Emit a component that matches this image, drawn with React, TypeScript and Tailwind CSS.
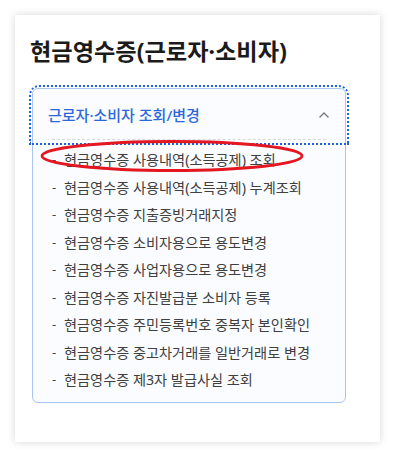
import React from "react";

const items = [
  "현금영수증 사용내역(소득공제) 조회",
  "현금영수증 사용내역(소득공제) 누계조회",
  "현금영수증 지출증빙거래지정",
  "현금영수증 소비자용으로 용도변경",
  "현금영수증 사업자용으로 용도변경",
  "현금영수증 자진발급분 소비자 등록",
  "현금영수증 주민등록번호 중복자 본인확인",
  "현금영수증 중고차거래를 일반거래로 변경",
  "현금영수증 제3자 발급사실 조회",
];

const App: React.FC = () => {
  return (
    <div className="w-[395px] h-[457px] bg-white p-[15px] font-['Noto_Sans','Noto_Sans_CJK_KR',sans-serif]">
      <div className="w-[365px] h-[427px] bg-white shadow-[0_0_8px_rgba(0,0,0,0.16)] pt-[21px] pl-[17px]">
        <h1 className="text-[23.2px] leading-[31px] font-bold text-[#1b1b1b] -ml-[2px]">
          현금영수증(근로자·소비자)
        </h1>
        <div className="mt-[21px] w-[314px] rounded-[6px] border border-[#a9c6f3] bg-[#fafcff]">
          <button className="w-full h-[52px] flex items-center justify-between pl-[15px] pr-[14px] outline-2 outline-dotted outline-[#1f5fe0] outline-offset-[2px] rounded-t-[6px] relative">
            <span className="text-[15px] font-medium text-[#2c67dc]">
              근로자·소비자 조회/변경
            </span>
            <svg width="12" height="8" viewBox="0 0 12 8" className="mr-[1px]">
              <path d="M1.5 6.5 L6 2 L10.5 6.5" fill="none" stroke="#7a7a82" strokeWidth="1.4" />
            </svg>
            <div className="absolute left-[19px] right-[19px] bottom-[1px] border-b border-dashed border-[#d6d9de]" />
          </button>
          <ul className="relative pt-[5px] pb-[8px] pl-[19px]">
            {items.map((t) => (
              <li key={t} className="flex items-center h-[27.5px] text-[14.2px] text-[#404040]">
                <span className="w-[12px] text-[13px] text-[#444]">-</span>
                <span>{t}</span>
              </li>
            ))}
            <svg
              className="absolute left-[7px] top-[-2px]"
              width="264"
              height="34"
              viewBox="0 0 264 34"
            >
              <ellipse cx="132" cy="17" rx="130" ry="14.5" fill="none" stroke="#e4161f" strokeWidth="2.8" />
            </svg>
          </ul>
        </div>
      </div>
    </div>
  );
};

export default App;
